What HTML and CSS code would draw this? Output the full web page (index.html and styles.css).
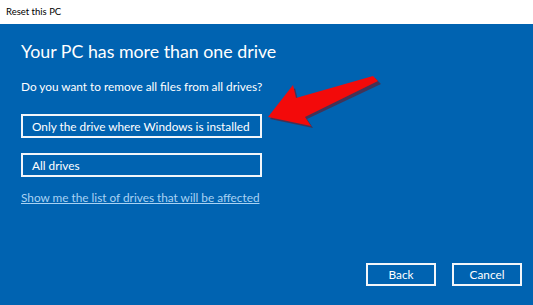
FILE: index.html
```html
<!doctype html>
<html lang="en">
	<head>
		<title>Reset this PC</title>
		<meta charset="utf-8" />
		<link rel="stylesheet" href="styles.css">
	</head>
	<body>
		<div class="titlebar">Reset this PC</div>
		<div class="page">
			<h1 class="heading">Your PC has more than one drive</h1>
			<p class="question">Do you want to remove all files from all drives?</p>
			<div class="choices">
				<button class="choice">Only the drive where Windows is installed</button>
				<button class="choice">All drives</button>
			</div>
			<a class="drives-link" href="#">Show me the list of drives that will be affected</a>
			<div class="footer">
				<button class="action">Back</button>
				<button class="action">Cancel</button>
			</div>
		</div>
		<svg class="pointer" width="533" height="305" viewBox="0 0 533 305">
			<polygon points="270,119 295,88 298,100 375,78 381,84 307,119 313,128" fill="#7a0d0d" opacity="0.55"/>
			<polygon points="268,117 293,85 296,98 373,76 378,81 305,117 311,126" fill="#f30a0a"/>
		</svg>
	</body>
</html>
```
FILE: styles.css
```css
body {
	margin: 0;
	width: 533px;
	height: 305px;
	overflow: hidden;
	font-family: "Lato", "Open Sans", sans-serif;
	background: #0063b1;
	display: flex;
	flex-direction: column;
	position: relative;
}

.titlebar {
	height: 24px;
	background: #ffffff;
	color: #000;
	font-size: 9.5px;
	line-height: 24px;
	padding-left: 6px;
	box-sizing: border-box;
}

.page {
	flex: 1;
	display: flex;
	flex-direction: column;
	align-items: flex-start;
	padding: 15px 11px 19px 21px;
	color: #fff;
}

.heading {
	margin: 0;
	font-size: 17.8px;
	line-height: 24px;
	font-weight: normal;
}

.question {
	margin: 15px 0 0;
	font-size: 11.8px;
	line-height: 18px;
}

.choices {
	margin-top: 18px;
	display: flex;
	flex-direction: column;
	gap: 15px;
}

.choice {
	width: 241px;
	height: 24px;
	border: 2px solid #f2f6fa;
	background: transparent;
	color: #fff;
	font-family: inherit;
	font-size: 11.8px;
	text-align: left;
	white-space: nowrap;
	padding: 0 0 0 9px;
}

.drives-link {
	margin-top: 12px;
	font-size: 11.8px;
	line-height: 18px;
	color: #a9d2f3;
	text-decoration: underline;
}

.footer {
	margin-top: auto;
	align-self: stretch;
	display: flex;
	justify-content: flex-end;
	gap: 16px;
}

.action {
	width: 70px;
	height: 23px;
	border: 2px solid #f2f6fa;
	background: transparent;
	color: #fff;
	font-family: inherit;
	font-size: 11.8px;
	padding: 0;
}

.pointer {
	position: absolute;
	left: 0;
	top: 0;
	pointer-events: none;
}
```
